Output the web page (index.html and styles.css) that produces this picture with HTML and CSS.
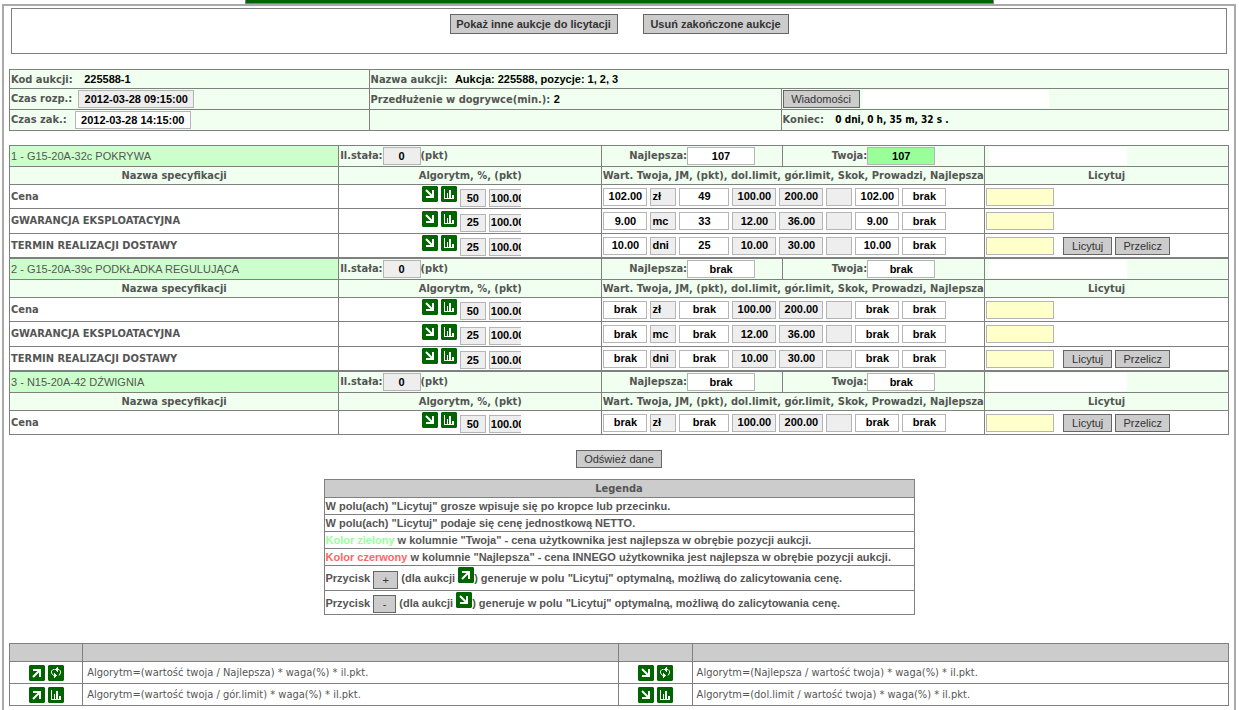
FILE: index.html
```html
<!DOCTYPE html>
<html lang="pl">
<head>
<meta charset="utf-8">
<title>Aukcja 225588-1</title>
<link rel="stylesheet" href="styles.css">
</head>
<body>
<svg class="sprite" aria-hidden="true">
  <symbol id="down" viewBox="0 0 16 16"><path class="tile" d="M1 0H15L16 1V15L15 16H1L0 15V1Z"/><path class="thick" d="M4 4L10 10M4 11H12M11 4V12"/></symbol>
  <symbol id="up" viewBox="0 0 16 16"><path class="tile" d="M1 0H15L16 1V15L15 16H1L0 15V1Z"/><path class="thick" d="M4 12L10 6M4 5H12M11 4V12"/></symbol>
  <symbol id="bars" viewBox="0 0 16 16"><path class="tile" d="M1 0H15L16 1V15L15 16H1L0 15V1Z"/><path class="ink" d="M3 3H4V12H13V13H3ZM6 7H7V12H6ZM8 4H10V12H8ZM11 9H13V12H11Z"/></symbol>
  <symbol id="cycle" viewBox="0 0 16 16"><path class="tile" d="M1 0H15L16 1V15L15 16H1L0 15V1Z"/><path class="thin" d="M6.500 4.500H5L3.500 6V8L5.500 10.500H8M8 4.500H11L12.500 6V8L11 10.500"/><path class="ink" d="M10 2V7L7 4.500ZM6 8L9 10.500L6 13Z"/></symbol>
</svg>
<div class="topbar"></div>
<main class="frame">
  <div class="panel">
    <button class="btn big">Pokaż inne aukcje do licytacji</button>
    <button class="btn big second">Usuń zakończone aukcje</button>
  </div>

  <table class="grid info">
    <colgroup><col class="i1"><col class="i2"><col class="i3"></colgroup>
    <tr class="r19"><td>Kod aukcji: <span class="val gap">225588-1</span></td><td colspan="2">Nazwa aukcji: <span class="val gap2">Aukcja: 225588, pozycje: 1, 2, 3</span></td></tr>
    <tr class="r21"><td><div class="line"><label for="start">Czas rozp.:</label><input id="start" class="f date gray" value="2012-03-28 09:15:00" readonly></div></td><td>Przedłużenie w dogrywce(min.): <span class="val">2</span></td><td><div class="line tight"><button class="btn msg">Wiadomości</button><span class="blank wide"></span></div></td></tr>
    <tr class="r21"><td><div class="line end"><label for="end">Czas zak.:</label><input id="end" class="f date" value="2012-03-28 14:15:00" readonly></div></td><td></td><td>Koniec: <span class="clock">0 dni, 0 h, 35 m, 32 s .</span></td></tr>
  </table>

  <div id="items"></div>

  <div class="refresh"><button class="btn semi">Odśwież dane</button></div>

  <table class="grid legend">
    <tr class="r18"><th>Legenda</th></tr>
    <tr class="r17"><td>W polu(ach) "Licytuj" grosze wpisuje się po kropce lub przecinku.</td></tr>
    <tr class="r17"><td>W polu(ach) "Licytuj" podaje się cenę jednostkową NETTO.</td></tr>
    <tr class="r17"><td><span class="green">Kolor zielony</span> w kolumnie "Twoja" - cena użytkownika jest najlepsza w obrębie pozycji aukcji.</td></tr>
    <tr class="r17"><td><span class="red">Kolor czerwony</span> w kolumnie "Najlepsza" - cena INNEGO użytkownika jest najlepsza w obrębie pozycji aukcji.</td></tr>
    <tr class="r25"><td>Przycisk <button class="btn plus">+</button> (dla aukcji <svg class="ico"><use href="#up"/></svg>) generuje w polu "Licytuj" optymalną, możliwą do zalicytowania cenę.</td></tr>
    <tr class="r24"><td>Przycisk <button class="btn minus">-</button> (dla aukcji <svg class="ico"><use href="#down"/></svg>) generuje w polu "Licytuj" optymalną, możliwą do zalicytowania cenę.</td></tr>
  </table>

  <table class="grid algo">
    <colgroup><col class="a1"><col class="a2"><col class="a1"><col class="a2"></colgroup>
    <tr class="r18"><th></th><th></th><th></th><th></th></tr>
    <tr class="r22"><td><div class="pair"><svg class="ico"><use href="#up"/></svg><svg class="ico"><use href="#cycle"/></svg></div></td><td>Algorytm=(wartość twoja / Najlepsza) * waga(%) * il.pkt.</td><td><div class="pair"><svg class="ico"><use href="#down"/></svg><svg class="ico"><use href="#cycle"/></svg></div></td><td>Algorytm=(Najlepsza / wartość twoja) * waga(%) * il.pkt.</td></tr>
    <tr class="r22"><td><div class="pair"><svg class="ico"><use href="#up"/></svg><svg class="ico"><use href="#bars"/></svg></div></td><td>Algorytm=(wartość twoja / gór.limit) * waga(%) * il.pkt.</td><td><div class="pair"><svg class="ico"><use href="#down"/></svg><svg class="ico"><use href="#bars"/></svg></div></td><td>Algorytm=(dol.limit / wartość twoja) * waga(%) * il.pkt.</td></tr>
  </table>
</main>
<script src="items.js"></script>
</body>
</html>
```
FILE: styles.css
```css
* { box-sizing: border-box; }
body {
  margin: 0;
  min-height: 100vh;
  display: flex;
  flex-direction: column;
  background: #fff;
  color: #555;
  font: bold 11px/14px "DejaVu Sans Condensed", "Noto Sans", sans-serif;
}
.sprite { position: absolute; width: 0; height: 0; }
.tile { fill: #006400; }
.ink { fill: #fff; shape-rendering: crispEdges; }
.thick { fill: none; stroke: #fff; stroke-width: 2; }
.thin { fill: none; stroke: #fff; stroke-width: 1; }
.ico { width: 16px; height: 16px; flex: none; }

.topbar {
  width: 60.5%;
  height: 4px;
  margin: 0 auto;
  background: #006400;
  border: solid #808080;
  border-width: 0 1px 1px;
}
.frame {
  flex: 1;
  margin: 0 3px 0 2px;
  padding: 2px 5px 4px;
  border: 2px solid #aaa;
  border-bottom: 0;
}
.panel {
  display: flex;
  justify-content: center;
  align-items: flex-start;
  gap: 25px;
  margin: 0 2px 15px;
  padding: 5px 0 19px;
  border: 1px solid #808080;
}
button, input { font-family: "Liberation Sans", sans-serif; margin: 0; }
.btn {
  flex: none;
  height: 18px;
  padding: 0 4px;
  border: 1px solid #666;
  border-radius: 0;
  background: #ccc;
  color: #333;
  font-size: 11px;
  line-height: 14px;
  white-space: nowrap;
}
.big { width: 168px; height: 20px; font: bold 11px/16px "Liberation Sans", sans-serif; }
.second { width: 146px; }
.msg { width: 77px; }
.semi { width: 86px; }

.grid { width: 100%; border-collapse: collapse; table-layout: fixed; }
.grid td, .grid th { border: 1px solid #808080; padding: 0 1px; text-align: left; font-weight: inherit; white-space: nowrap; }
.grid th { padding: 1px 0 0; text-align: center; }
.r17 { height: 17px; } .r18 { height: 18px; } .r19 { height: 19px; } .r21 { height: 21px; }
.r22 { height: 22px; } .r24 { height: 24px; } .r25 { height: 25px; }

.line { display: flex; align-items: center; gap: 6px; }
.end { gap: 8px; }
.tight { gap: 3px; }
.mid { justify-content: center; }
.join { gap: 0; }
.info { margin-bottom: 14px; background: #f0fff0; }
.i1 { width: 29.5%; } .i2 { width: 33.8%; }
.val { color: #000; font-family: "Liberation Sans", sans-serif; }
.gap { margin-left: 8px; }
.gap2 { margin-left: 4px; }
.clock { margin-left: 8px; color: #000; font-size: 10px; }
.blank { height: 18px; width: 138px; margin-left: 3px; background: #fff; }
.wide { width: 186px; margin-left: 0; }

.f {
  flex: none;
  height: 18px;
  padding: 0 2px 1px;
  border: 1px solid #b5b5b5;
  border-radius: 0;
  background: #fff;
  color: #000;
  font-size: 11px;
  font-weight: bold;
  text-align: center;
}
.gray { background: #eee; }
.yellow { background: #ffffcc; }
.best { background: #99ff99; }
.date { width: 116px; }
.w26 { width: 26px; } .w38 { width: 38px; } .w44 { width: 44px; } .w50 { width: 50px; } .w68 { width: 68px; }
.unit { text-align: left; padding-left: 1px; }
.cut { width: 32px; padding: 0 0 1px 1px; border-right: 0; text-align: left; }

.c1 { width: 27%; } .c2 { width: 21.600%; } .c3 { width: 14.800%; } .c4 { width: 16.600%; }
.head { background: #f0fff0; }
.head .name { background: #ccffcc; font-family: "Liberation Sans", sans-serif; font-weight: normal; }
.weights { display: flex; justify-content: center; gap: 3px; padding-left: 2px; }
.weights .f { margin-top: 3px; }
.act { width: 49px; margin-left: 6px; }
.calc { width: 55px; }

.refresh { display: flex; justify-content: center; padding: 15px 0 11px; }
.legend { width: auto; min-width: 591px; margin: 0 auto 28px; table-layout: auto; font-family: "Liberation Sans", sans-serif; }
.legend th, .algo th { background: #ccc; font-family: "DejaVu Sans Condensed", "Noto Sans", sans-serif; }
.green { color: #99ff99; }
.red { color: #ff6666; }
.plus { width: 25px; padding: 0; vertical-align: middle; }
.minus { width: 23px; padding: 0; vertical-align: middle; }
.legend .ico { vertical-align: -1px; }
.a1 { width: 6%; } .a2 { width: 44%; }
.grid.algo td { padding: 0 1px 0 4px; font-weight: normal; }
.grid.algo td:nth-child(odd) { padding-left: 1px; }
.pair { display: flex; justify-content: center; gap: 3px; }
```
FILE: items.js
```js
const brak = 'brak';
const items = [
  { no: 1, name: '1 - G15-20A-32c POKRYWA', best: '107', mine: '107', lead: true, specs: [
    ['Cena', '50', '102.00', 'zł', '49', '100.00', '200.00', '102.00'],
    ['GWARANCJA EKSPLOATACYJNA', '25', '9.00', 'mc', '33', '12.00', '36.00', '9.00'],
    ['TERMIN REALIZACJI DOSTAWY', '25', '10.00', 'dni', '25', '10.00', '30.00', '10.00']] },
  { no: 2, name: '2 - G15-20A-39c PODKŁADKA REGULUJĄCA', best: brak, mine: brak, specs: [
    ['Cena', '50', brak, 'zł', brak, '100.00', '200.00', brak],
    ['GWARANCJA EKSPLOATACYJNA', '25', brak, 'mc', brak, '12.00', '36.00', brak],
    ['TERMIN REALIZACJI DOSTAWY', '25', brak, 'dni', brak, '10.00', '30.00', brak]] },
  { no: 3, name: '3 - N15-20A-42 DŹWIGNIA', best: brak, mine: brak, specs: [
    ['Cena', '50', brak, 'zł', brak, '100.00', '200.00', brak]] }
];
const field = (value, cls, label) => `<input class="f ${cls}" value="${value}" aria-label="${label}" readonly>`;
const icon = id => `<svg class="ico"><use href="#${id}"/></svg>`;
const specRow = (s, i, all) => `<tr class="${i === 1 ? 'r25' : 'r24'}">
  <td>${s[0]}</td>
  <td><div class="weights">${icon('down')}${icon('bars')}${field(s[1], 'gray w26', '%')}${field('100.00', 'gray cut', 'pkt')}</div></td>
  <td colspan="2"><div class="line tight">${field(s[2], 'w44', 'Wart. Twoja')}${field(s[3], 'gray w26 unit', 'JM')}${field(s[4], 'w50', 'pkt')}${field(s[5], 'gray w44', 'dol.limit')}${field(s[6], 'gray w44', 'gór.limit')}${field('', 'gray w26', 'Skok')}${field(s[7], 'w44', 'Prowadzi')}${field(brak, 'w44', 'Najlepsza')}</div></td>
  <td><div class="line tight"><input class="f yellow w68" aria-label="Licytuj ${s[0]}">${i === all.length - 1 ? '<button class="btn act">Licytuj</button><button class="btn calc">Przelicz</button>' : ''}</div></td></tr>`;
document.getElementById('items').innerHTML = items.map(it => `<table class="grid">
  <colgroup><col class="c1"><col class="c2"><col class="c3"><col class="c4"><col></colgroup>
  <tr class="head r21"><td class="name">${it.name}</td>
  <td><div class="line join"><label for="q${it.no}">Il.stała:</label><input id="q${it.no}" class="f gray w38" value="0" readonly>(pkt)</div></td>
  <td><div class="line join mid"><label for="b${it.no}">Najlepsza:</label><input id="b${it.no}" class="f w68" value="${it.best}" readonly></div></td>
  <td><div class="line join mid"><label for="m${it.no}">Twoja:</label><input id="m${it.no}" class="f w68${it.lead ? ' best' : ''}" value="${it.mine}" readonly></div></td>
  <td><div class="line"><span class="blank"></span></div></td></tr>
  <tr class="head r18"><th>Nazwa specyfikacji</th><th>Algorytm, %, (pkt)</th><th colspan="2">Wart. Twoja, JM, (pkt), dol.limit, gór.limit, Skok, Prowadzi, Najlepsza</th><th>Licytuj</th></tr>
  ${it.specs.map(specRow).join('')}</table>`).join('');
```
